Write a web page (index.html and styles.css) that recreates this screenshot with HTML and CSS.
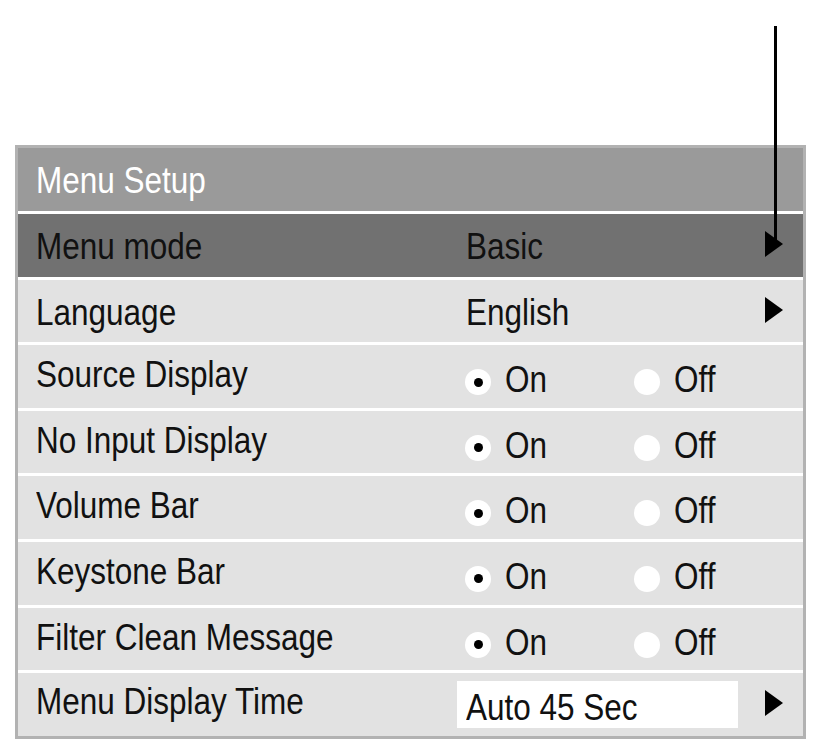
FILE: index.html
```html
<!DOCTYPE html>
<html>
<head>
<meta charset="utf-8">
<link rel="stylesheet" href="styles.css">
</head>
<body>
<div class="page">
  <div class="callout"></div>
  <div class="panel">
    <div class="row header"><span class="label">Menu Setup</span></div>
    <div class="sep"></div>
    <div class="row selected"><span class="label">Menu mode</span><span class="value">Basic</span><span class="tri"></span></div>
    <div class="sep"></div>
    <div class="row"><span class="label">Language</span><span class="value">English</span><span class="tri"></span></div>
    <div class="sep"></div>
    <div class="row radio-row"><span class="label">Source Display</span>
      <div class="options"><div class="opt"><span class="radio on"></span><span class="otext">On</span></div><div class="opt"><span class="radio"></span><span class="otext">Off</span></div></div></div>
    <div class="sep"></div>
    <div class="row radio-row"><span class="label">No Input Display</span>
      <div class="options"><div class="opt"><span class="radio on"></span><span class="otext">On</span></div><div class="opt"><span class="radio"></span><span class="otext">Off</span></div></div></div>
    <div class="sep"></div>
    <div class="row radio-row"><span class="label">Volume Bar</span>
      <div class="options"><div class="opt"><span class="radio on"></span><span class="otext">On</span></div><div class="opt"><span class="radio"></span><span class="otext">Off</span></div></div></div>
    <div class="sep"></div>
    <div class="row radio-row"><span class="label">Keystone Bar</span>
      <div class="options"><div class="opt"><span class="radio on"></span><span class="otext">On</span></div><div class="opt"><span class="radio"></span><span class="otext">Off</span></div></div></div>
    <div class="sep"></div>
    <div class="row radio-row"><span class="label">Filter Clean Message</span>
      <div class="options"><div class="opt"><span class="radio on"></span><span class="otext">On</span></div><div class="opt"><span class="radio"></span><span class="otext">Off</span></div></div></div>
    <div class="sep"></div>
    <div class="row last-row"><span class="label">Menu Display Time</span><div class="boxval"><span class="value">Auto 45 Sec</span></div><span class="tri"></span></div>
  </div>
</div>
</body>
</html>
```

FILE: styles.css
```css
html, body {
  margin: 0;
  padding: 0;
  background: #ffffff;
}

body {
  font-family: "Liberation Sans", Arial, sans-serif;
  color: #111111;
}

.page {
  position: relative;
  width: 824px;
  height: 752px;
  padding-top: 145px;
  box-sizing: border-box;
}

.callout {
  position: absolute;
  left: 774px;
  top: 26px;
  width: 3px;
  height: 214px;
  background: #000000;
  z-index: 2;
}

.panel {
  margin-left: 15px;
  width: 791px;
  border: 3px solid #b2b2b2;
  box-sizing: border-box;
  background: #ffffff;
  display: flex;
  flex-direction: column;
}

.sep {
  height: 3px;
  background: #ffffff;
}

.row {
  height: 62.6px;
  box-sizing: border-box;
  padding: 13px 20px 0 18px;
  display: grid;
  grid-template-columns: 430px 1fr auto;
  align-items: start;
  background: #e2e2e2;
  font-size: 36px;
  line-height: 40px;
}

.header {
  height: 63px;
  background: #9a9a9a;
  color: #ffffff;
}

.selected {
  background: #717171;
}

.label, .value, .otext {
  display: block;
  transform: scaleX(0.875);
  transform-origin: 0 50%;
  white-space: nowrap;
}

.tri {
  width: 0;
  height: 0;
  margin-top: 4px;
  border-left: 18px solid #000000;
  border-top: 13px solid transparent;
  border-bottom: 13px solid transparent;
}

.radio-row .label {
  margin-top: -3px;
}

.options {
  display: grid;
  grid-template-columns: 169px 169px;
  margin-top: 2px;
}

.opt {
  display: flex;
  align-items: flex-start;
}

.radio {
  width: 26px;
  height: 26px;
  margin-left: -1px;
  margin-top: 9px;
  margin-right: 14px;
  border-radius: 50%;
  background: #ffffff;
  display: flex;
  align-items: center;
  justify-content: center;
  flex: none;
}

.radio.on::after {
  content: "";
  width: 9px;
  height: 9px;
  border-radius: 50%;
  background: #000000;
}

.last-row .label {
  margin-top: -4px;
}

.boxval {
  margin-top: -5px;
  margin-left: -9px;
  width: 281px;
  height: 47px;
  box-sizing: border-box;
  padding: 7px 0 0 9px;
  background: #ffffff;
}
```
